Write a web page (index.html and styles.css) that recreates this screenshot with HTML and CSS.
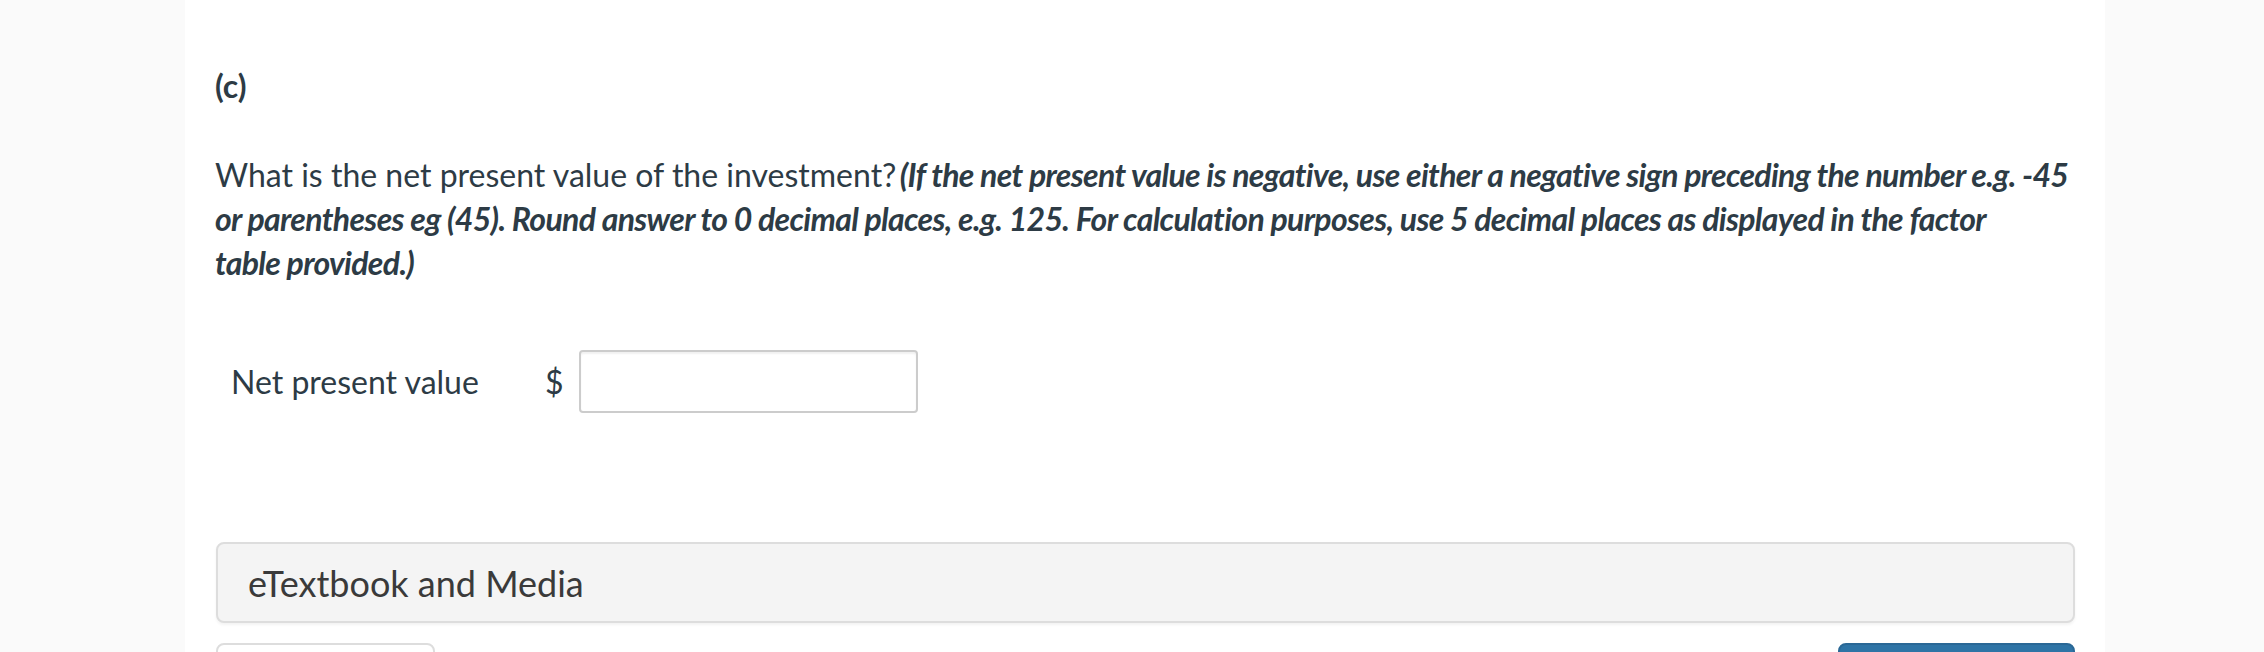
FILE: index.html
```html
<!DOCTYPE html>
<html lang="en">
<head>
<meta charset="utf-8">
<title>Net present value</title>
<link rel="stylesheet" href="styles.css">
</head>
<body>
<main class="panel">
  <p class="part">(c)</p>
  <p class="question">What is the net present value of the investment? <em class="hint">(If the net present value is negative, use either a negative sign preceding the number e.g. -45 or parentheses eg (45). Round answer to 0 decimal places, e.g. 125. For calculation purposes, use 5 decimal places as displayed in the factor<br>table provided.)</em></p>
  <div class="answer-row">
    <label class="answer-label" for="npv">Net present value</label>
    <span class="currency">$</span>
    <input class="answer-input" id="npv" type="text">
  </div>
  <div class="media-box">eTextbook and Media</div>
  <div class="actions">
    <button class="btn btn-secondary" type="button"></button>
    <button class="btn btn-primary" type="button"></button>
  </div>
</main>
</body>
</html>
```
FILE: styles.css
```css
html, body {
  margin: 0;
  padding: 0;
  background: #fafafa;
  height: 100%;
  overflow: hidden;
}
body {
  font-family: Lato, "Open Sans", sans-serif;
  color: #2d3b45;
  font-size: 32px;
  line-height: 44px;
}
.panel {
  margin-left: 185px;
  width: 1920px;
  box-sizing: border-box;
  min-height: 100%;
  background: #ffffff;
  padding: 64px 30px 0 30px;
}
.part {
  margin: 0 0 45px 0;
  font-weight: 700;
}
.question {
  margin: 0;
}
.hint {
  font-weight: 700;
  font-style: italic;
  letter-spacing: -0.66px;
  margin-left: -5px;
}
.answer-row {
  display: flex;
  align-items: center;
  margin-top: 65px;
  padding-left: 16px;
}
.answer-label {
  width: 314px;
}
.currency {
  width: 34px;
}
.answer-input {
  width: 339px;
  height: 63px;
  box-sizing: border-box;
  border: 2px solid #cccccc;
  border-radius: 4px;
  box-shadow: inset 0 2px 2px rgba(0,0,0,0.06);
  background: #fff;
  margin: 0;
}
.media-box {
  margin-top: 129px;
  margin-left: 1px;
  height: 81px;
  box-sizing: border-box;
  border: 2px solid #dddddd;
  border-radius: 8px;
  background: #f4f4f4;
  box-shadow: 0 2px 3px rgba(0,0,0,0.05);
  padding-left: 30px;
  display: flex;
  align-items: center;
  font-size: 36px;
  color: #3a3a3a;
}
.actions {
  display: flex;
  justify-content: space-between;
  margin-top: 20px;
  margin-left: 1px;
}
.btn {
  height: 60px;
  border-radius: 8px;
  margin: 0;
}
.btn-secondary {
  width: 219px;
  background: #ffffff;
  border: 2px solid #dddddd;
}
.btn-primary {
  width: 237px;
  background: #2e74a6;
  border: 2px solid #2a6896;
}
```
